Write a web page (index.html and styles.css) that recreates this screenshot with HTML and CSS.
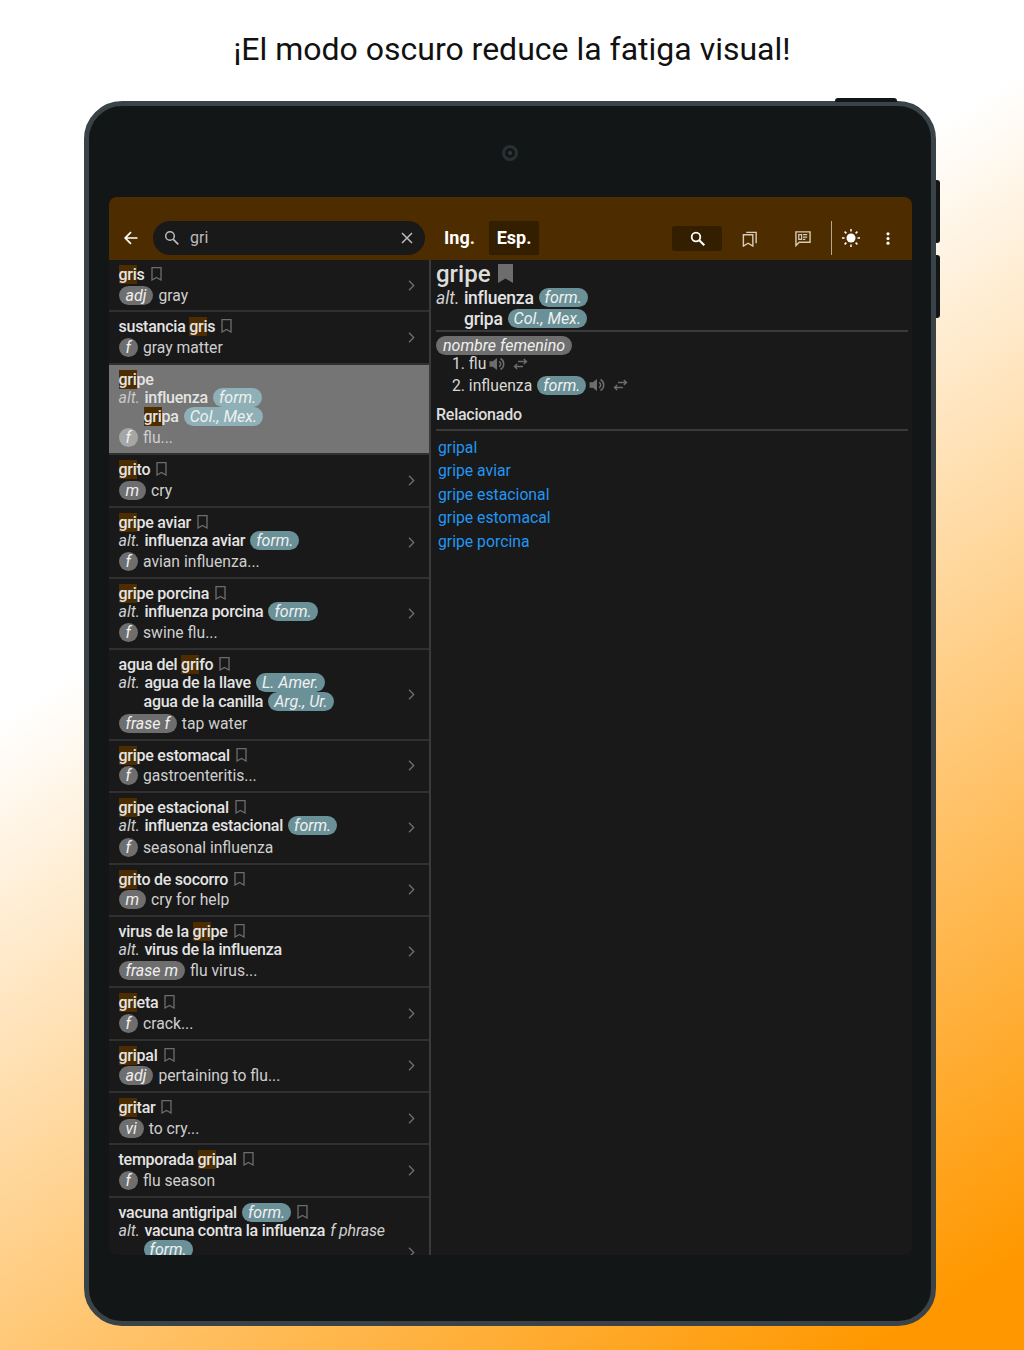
FILE: index.html
```html
<!DOCTYPE html>
<html lang="es">
<head>
  <meta charset="UTF-8">
  <title>Dictionary dark mode</title>
  <link rel="stylesheet" href="styles.css">
</head>
<body>

  <svg class="icon-defs" width="0" height="0">
    <symbol id="i-mark" viewBox="0 0 11 14"><path d="M1 .7h9v12.300L5.500 10.500 1 13z" fill="none" stroke="currentColor" stroke-width="1.300"/></symbol>
    <symbol id="i-next" viewBox="0 0 7 11"><path d="M1 .8l4.700 4.700L1 10.200" fill="none" stroke="currentColor" stroke-width="1.400"/></symbol>
    <symbol id="i-sound" viewBox="0 0 16 14"><path d="M.5 4.300h3.300L8 1v12L3.800 9.700H.5z" fill="currentColor"/><path d="M10 4.300a3 3 0 0 1 0 5.400M11.500 1.500a6.300 6.300 0 0 1 0 11" fill="none" stroke="currentColor" stroke-width="1.500"/></symbol>
    <symbol id="i-swap" viewBox="0 0 15 12"><path d="M5 3.500h8M10.800 1l2.700 2.500-2.700 2.500M10 8.500H2M4.200 6L1.500 8.500 4.200 11" fill="none" stroke="currentColor" stroke-width="1.400"/></symbol>
  </svg>

  <h1 class="caption">¡El modo oscuro reduce la fatiga visual!</h1>

  <div class="tablet">
    <span class="btn-top"></span>
    <span class="btn-side btn-one"></span>
    <span class="btn-side btn-two"></span>
    <div class="camera"></div>

    <div class="screen">
      <div class="toolbar">
        <svg class="back" viewBox="0 0 14 14"><path d="M13.500 7H1.500M7 1.200L1.200 7 7 12.800" fill="none" stroke="#fff" stroke-width="1.700"/></svg>
        <div class="search">
          <svg class="search-icon" viewBox="0 0 15 15"><circle cx="6" cy="6" r="4.300" fill="none" stroke="currentColor" stroke-width="1.500"/><path d="M9.300 9.300l5 5" stroke="currentColor" stroke-width="1.700"/></svg>
          <span class="search-text">gri</span>
          <svg class="search-clear" viewBox="0 0 12 12"><path d="M1 1l10 10M11 1L1 11" stroke="currentColor" stroke-width="1.500"/></svg>
        </div>
        <div class="lang">Ing.</div>
        <div class="lang lang-on">Esp.</div>
        <div class="tools">
          <div class="tool tool-on">
            <svg class="tool-search" viewBox="0 0 15 15"><circle cx="6" cy="6" r="4.300" fill="none" stroke="#fff" stroke-width="1.800"/><path d="M9.300 9.300l5 5" stroke="#fff" stroke-width="2"/></svg>
          </div>
          <div class="tool">
            <svg class="tool-icon" viewBox="0 0 16 18"><path d="M1 5h10v12l-5-3-5 3z" fill="none" stroke="currentColor" stroke-width="1.500"/><path d="M4 2.500h10.500V14" fill="none" stroke="currentColor" stroke-width="1.500"/></svg>
          </div>
          <div class="tool">
            <svg class="tool-icon" viewBox="0 0 17 17"><path d="M1 1.500h15v11H4.500L1 16z" fill="none" stroke="currentColor" stroke-width="1.500"/><path d="M4 4.500h3v5H4zM8.500 4.500H13M8.500 7H13M8.500 9.500h2.500" fill="none" stroke="currentColor" stroke-width="1.300"/></svg>
          </div>
          <div class="tool-line"></div>
          <svg class="sun" viewBox="0 0 18 18"><circle cx="9" cy="9" r="4.500" fill="#fff"/><path d="M9 0v2.500M9 15.500V18M0 9h2.500M15.500 9H18M2.600 2.600l1.800 1.800M13.600 13.600l1.800 1.800M15.400 2.600l-1.800 1.800M4.400 13.600l-1.800 1.800" stroke="#fff" stroke-width="1.500"/></svg>
          <svg class="dots" viewBox="0 0 4 14"><circle cx="2" cy="2" r="1.700" fill="#fff"/><circle cx="2" cy="7" r="1.700" fill="#fff"/><circle cx="2" cy="12" r="1.700" fill="#fff"/></svg>
        </div>
      </div>

      <div class="panes">
        <div class="list">

          <div class="row">
            <div class="row-body">
              <div class="head"><b><mark>gri</mark>s</b><svg class="mark"><use href="#i-mark"/></svg></div>
              <div class="def"><i class="pill">adj</i>gray</div>
            </div>
            <svg class="next"><use href="#i-next"/></svg>
          </div>

          <div class="row">
            <div class="row-body">
              <div class="head"><b>sustancia <mark>gri</mark>s</b><svg class="mark"><use href="#i-mark"/></svg></div>
              <div class="def"><i class="pill">f</i>gray matter</div>
            </div>
            <svg class="next"><use href="#i-next"/></svg>
          </div>

          <div class="row row-on">
            <div class="row-body">
              <div class="head"><b><mark>gri</mark>pe</b></div>
              <div class="alt"><i class="alt-label">alt.</i><b>influenza</b><i class="tag">form.</i></div>
              <div class="alt alt-more"><b><mark>gri</mark>pa</b><i class="tag">Col., Mex.</i></div>
              <div class="def"><i class="pill">f</i>flu...</div>
            </div>
          </div>

          <div class="row">
            <div class="row-body">
              <div class="head"><b><mark>gri</mark>to</b><svg class="mark"><use href="#i-mark"/></svg></div>
              <div class="def"><i class="pill">m</i>cry</div>
            </div>
            <svg class="next"><use href="#i-next"/></svg>
          </div>

          <div class="row">
            <div class="row-body">
              <div class="head"><b><mark>gri</mark>pe aviar</b><svg class="mark"><use href="#i-mark"/></svg></div>
              <div class="alt"><i class="alt-label">alt.</i><b>influenza aviar</b><i class="tag">form.</i></div>
              <div class="def"><i class="pill">f</i>avian influenza...</div>
            </div>
            <svg class="next"><use href="#i-next"/></svg>
          </div>

          <div class="row">
            <div class="row-body">
              <div class="head"><b><mark>gri</mark>pe porcina</b><svg class="mark"><use href="#i-mark"/></svg></div>
              <div class="alt"><i class="alt-label">alt.</i><b>influenza porcina</b><i class="tag">form.</i></div>
              <div class="def"><i class="pill">f</i>swine flu...</div>
            </div>
            <svg class="next"><use href="#i-next"/></svg>
          </div>

          <div class="row">
            <div class="row-body">
              <div class="head"><b>agua del <mark>gri</mark>fo</b><svg class="mark"><use href="#i-mark"/></svg></div>
              <div class="alt"><i class="alt-label">alt.</i><b>agua de la llave</b><i class="tag">L. Amer.</i></div>
              <div class="alt alt-more"><b>agua de la canilla</b><i class="tag">Arg., Ur.</i></div>
              <div class="def"><i class="pill">frase f</i>tap water</div>
            </div>
            <svg class="next"><use href="#i-next"/></svg>
          </div>

          <div class="row">
            <div class="row-body">
              <div class="head"><b><mark>gri</mark>pe estomacal</b><svg class="mark"><use href="#i-mark"/></svg></div>
              <div class="def"><i class="pill">f</i>gastroenteritis...</div>
            </div>
            <svg class="next"><use href="#i-next"/></svg>
          </div>

          <div class="row">
            <div class="row-body">
              <div class="head"><b><mark>gri</mark>pe estacional</b><svg class="mark"><use href="#i-mark"/></svg></div>
              <div class="alt"><i class="alt-label">alt.</i><b>influenza estacional</b><i class="tag">form.</i></div>
              <div class="def"><i class="pill">f</i>seasonal influenza</div>
            </div>
            <svg class="next"><use href="#i-next"/></svg>
          </div>

          <div class="row">
            <div class="row-body">
              <div class="head"><b><mark>gri</mark>to de socorro</b><svg class="mark"><use href="#i-mark"/></svg></div>
              <div class="def"><i class="pill">m</i>cry for help</div>
            </div>
            <svg class="next"><use href="#i-next"/></svg>
          </div>

          <div class="row">
            <div class="row-body">
              <div class="head"><b>virus de la <mark>gri</mark>pe</b><svg class="mark"><use href="#i-mark"/></svg></div>
              <div class="alt"><i class="alt-label">alt.</i><b>virus de la influenza</b></div>
              <div class="def"><i class="pill">frase m</i>flu virus...</div>
            </div>
            <svg class="next"><use href="#i-next"/></svg>
          </div>

          <div class="row">
            <div class="row-body">
              <div class="head"><b><mark>gri</mark>eta</b><svg class="mark"><use href="#i-mark"/></svg></div>
              <div class="def"><i class="pill">f</i>crack...</div>
            </div>
            <svg class="next"><use href="#i-next"/></svg>
          </div>

          <div class="row">
            <div class="row-body">
              <div class="head"><b><mark>gri</mark>pal</b><svg class="mark"><use href="#i-mark"/></svg></div>
              <div class="def"><i class="pill">adj</i>pertaining to flu...</div>
            </div>
            <svg class="next"><use href="#i-next"/></svg>
          </div>

          <div class="row">
            <div class="row-body">
              <div class="head"><b><mark>gri</mark>tar</b><svg class="mark"><use href="#i-mark"/></svg></div>
              <div class="def"><i class="pill">vi</i>to cry...</div>
            </div>
            <svg class="next"><use href="#i-next"/></svg>
          </div>

          <div class="row">
            <div class="row-body">
              <div class="head"><b>temporada <mark>gri</mark>pal</b><svg class="mark"><use href="#i-mark"/></svg></div>
              <div class="def"><i class="pill">f</i>flu season</div>
            </div>
            <svg class="next"><use href="#i-next"/></svg>
          </div>

          <div class="row row-last">
            <div class="row-body">
              <div class="head"><b>vacuna antigripal</b><i class="tag">form.</i><svg class="mark"><use href="#i-mark"/></svg></div>
              <div class="alt"><i class="alt-label">alt.</i><b>vacuna contra la influenza</b><i class="alt-label after">f phrase</i></div>
              <div class="alt alt-more"><i class="tag no-gap">form.</i></div>
            </div>
            <svg class="next"><use href="#i-next"/></svg>
          </div>

        </div>

        <div class="detail">
          <div class="title">gripe<svg class="title-mark" viewBox="0 0 15 19"><path d="M0 0h15v19l-7.500-4.500L0 19z" fill="currentColor"/></svg></div>
          <div class="alt"><i class="alt-label">alt.</i><b>influenza</b><i class="tag">form.</i></div>
          <div class="alt alt-more"><b>gripa</b><i class="tag">Col., Mex.</i></div>
          <div class="detail-line"></div>
          <div class="kind"><i class="pill">nombre femenino</i></div>
          <ol class="senses">
            <li>1. flu<svg class="sound"><use href="#i-sound"/></svg><svg class="swap"><use href="#i-swap"/></svg></li>
            <li>2. influenza<i class="tag">form.</i><svg class="sound"><use href="#i-sound"/></svg><svg class="swap"><use href="#i-swap"/></svg></li>
          </ol>
          <h3 class="related">Relacionado</h3>
          <div class="detail-line"></div>
          <div class="links">
            <a href="#">gripal</a>
            <a href="#">gripe aviar</a>
            <a href="#">gripe estacional</a>
            <a href="#">gripe estomacal</a>
            <a href="#">gripe porcina</a>
          </div>
        </div>
      </div>
    </div>
  </div>

</body>
</html>
```

FILE: styles.css
```css
* {
  box-sizing: border-box;
}

html, body {
  margin: 0;
  height: 1350px;
  overflow: hidden;
}

body {
  font-family: Roboto, sans-serif;
  background: linear-gradient(147.6deg, #fff 36%, #ff9800 95%);
  padding-top: 28px;
}

.icon-defs {
  display: block;
  position: absolute;
}

.caption {
  margin: 0 0 31px;
  height: 42px;
  line-height: 42px;
  text-align: center;
  font-size: 32px;
  font-weight: 400;
  color: #111;
}

/* Tablet frame */
.tablet {
  position: relative;
  width: 852px;
  height: 1225px;
  margin-left: 84px;
  padding: 91px 19px 0 20px;
  background-color: #121617;
  border: 5px solid #3a4347;
  border-radius: 38px;
}

.btn-top {
  position: absolute;
  top: -8px;
  right: 34px;
  width: 62px;
  height: 4px;
  background-color: #121617;
  border-radius: 3px 3px 0 0;
}

.btn-side {
  position: absolute;
  right: -9px;
  width: 4px;
  height: 63px;
  background-color: #121617;
  border-radius: 0 3px 3px 0;
}

.btn-one {
  top: 74px;
}

.btn-two {
  top: 149px;
}

.camera {
  position: absolute;
  top: 39px;
  left: 413px;
  width: 16px;
  height: 16px;
  border: 3px solid #2a3032;
  border-radius: 50%;
}

.camera::after {
  content: "";
  display: block;
  width: 4px;
  height: 4px;
  margin: 3px;
  background-color: #343a3c;
  border-radius: 50%;
}

.screen {
  width: 803px;
  height: 1058px;
  background-color: #191919;
  border-radius: 8px;
  overflow: hidden;
  color: #ddd;
}

/* Toolbar */
.toolbar {
  display: flex;
  align-items: flex-end;
  height: 63px;
  padding: 0 0 5px 15px;
  background-color: #4d2c00;
}

.back {
  width: 14px;
  height: 14px;
  margin: 0 15px 10px 0;
}

.search {
  display: flex;
  align-items: center;
  width: 272px;
  height: 34px;
  padding: 0 12px 1px 11px;
  margin-right: 9.500px;
  background-color: #191919;
  border-radius: 17px;
  color: #bbb;
}

.search-icon {
  width: 15px;
  height: 15px;
}

.search-text {
  flex: 1;
  margin-left: 11px;
  font-size: 16px;
}

.search-clear {
  width: 12px;
  height: 12px;
}

.lang {
  width: 50px;
  height: 34px;
  line-height: 34px;
  text-align: center;
  font-size: 18px;
  font-weight: 700;
  color: #fff;
  border-radius: 2px;
}

.lang-on {
  margin-left: 4.500px;
  background-color: #341e00;
}

.tools {
  display: flex;
  align-items: center;
  margin-left: 133px;
  height: 34px;
}

.tool {
  display: flex;
  align-items: center;
  justify-content: center;
  width: 50px;
  height: 25px;
  margin-right: 3px;
  border-radius: 3px;
  color: #d9cbb8;
}

.tool-on {
  background-color: #341e00;
}

.tool-search {
  width: 15px;
  height: 15px;
}

.tool-icon {
  width: 16px;
  height: 17px;
}

.tool-line {
  width: 1px;
  height: 34px;
  margin-right: 10px;
  background-color: #b8a68e;
}

.sun {
  width: 18px;
  height: 18px;
  margin-right: 26px;
}

.dots {
  width: 4px;
  height: 13px;
}

/* Word list */
.panes {
  display: flex;
  height: 995px;
}

.list {
  width: 322px;
  flex-shrink: 0;
  height: 995px;
  overflow: hidden;
  border-right: 2px solid #3a3a3a;
}

.row {
  display: flex;
  align-items: center;
  padding: 6px 14px 4.400px 9.500px;
  border-bottom: 2px solid #303030;
}

.row-last {
  height: 109px;
  border-bottom: none;
}

.row-last .row-body {
  align-self: flex-start;
}

.row-body {
  flex: 1;
}

.row-on {
  background-color: #757575;
}

.head {
  display: flex;
  align-items: center;
  height: 18px;
  margin-bottom: -1px;
  font-size: 16px;
  line-height: 18px;
  white-space: nowrap;
}

b {
  font-weight: 500;
  letter-spacing: -0.25px;
  color: #e4e4e4;
}

mark {
  color: inherit;
  background-color: #4d2c00;
}

.mark {
  width: 11px;
  height: 14px;
  margin: -2px 0 0 6px;
  color: #6d6d6d;
}

.next {
  width: 7px;
  height: 11px;
  margin-top: -2px;
  color: #6d6d6d;
  flex-shrink: 0;
}

.alt {
  display: flex;
  align-items: center;
  height: 19px;
  font-size: 16px;
  white-space: nowrap;
}

.alt-more {
  padding-left: 25px;
}

.alt-label {
  margin-right: 4.500px;
  color: #d0d0d0;
}

.after {
  margin: 0 0 0 5px;
  letter-spacing: -0.2px;
}

.def {
  display: flex;
  align-items: center;
  height: 23px;
  padding-top: 1px;
  font-size: 15.700px;
  color: #cfcfcf;
  white-space: nowrap;
}

.pill,
.tag {
  display: inline-block;
  min-width: 19.500px;
  height: 19px;
  line-height: 19px;
  padding: 0 6px;
  border-radius: 10px;
  text-align: center;
  font-style: italic;
  font-size: 16px;
  letter-spacing: 0;
  color: #f0f0f0;
  flex-shrink: 0;
}

.pill {
  margin-right: 5px;
  padding: 0 7px;
  background-color: #6e6e6e;
}

.tag {
  margin-left: 5px;
  background-color: #6b9198;
}

.no-gap {
  margin-left: 0;
}

.row-on .tag {
  background-color: #8fb0b6;
}

.row-on .pill {
  background-color: #a6a6a6;
}

.row-on .alt-label {
  color: #c8c8c8;
}

/* Detail pane */
.detail {
  flex: 1;
  padding: 0 4px 0 5px;
}

.title {
  display: flex;
  align-items: center;
  height: 27px;
  font-size: 24px;
  font-weight: 500;
  color: #ddd;
}

.title-mark {
  width: 15px;
  height: 19px;
  margin-left: 7px;
  color: #6d6d6d;
}

.detail .alt {
  height: 21px;
  font-size: 17.500px;
}

.detail .alt-more {
  padding-left: 28px;
}

.detail-line {
  height: 2px;
  margin-top: 1px;
  background-color: #3a3a3a;
}

.kind {
  height: 17px;
  margin-top: 4px;
}

.senses {
  list-style: none;
  margin: 0;
  padding: 0 0 0 16px;
  font-size: 15.700px;
  color: #d8d8d8;
}

.senses li {
  display: flex;
  align-items: center;
  height: 21.500px;
}

.sound {
  width: 16px;
  height: 14px;
  margin-left: 3px;
  color: #6d6d6d;
}

.swap {
  width: 15px;
  height: 12px;
  margin-left: 8px;
  color: #6d6d6d;
}

.related {
  margin: 6.500px 0 3px;
  height: 23px;
  line-height: 23px;
  font-size: 16px;
  font-weight: 500;
  letter-spacing: -0.25px;
  color: #ddd;
}

.links {
  display: flex;
  flex-direction: column;
  margin: 5px 0 0 2px;
}

.links a {
  height: 23.500px;
  line-height: 23.500px;
  font-size: 15.750px;
  color: #2196f3;
  text-decoration: none;
}
```
